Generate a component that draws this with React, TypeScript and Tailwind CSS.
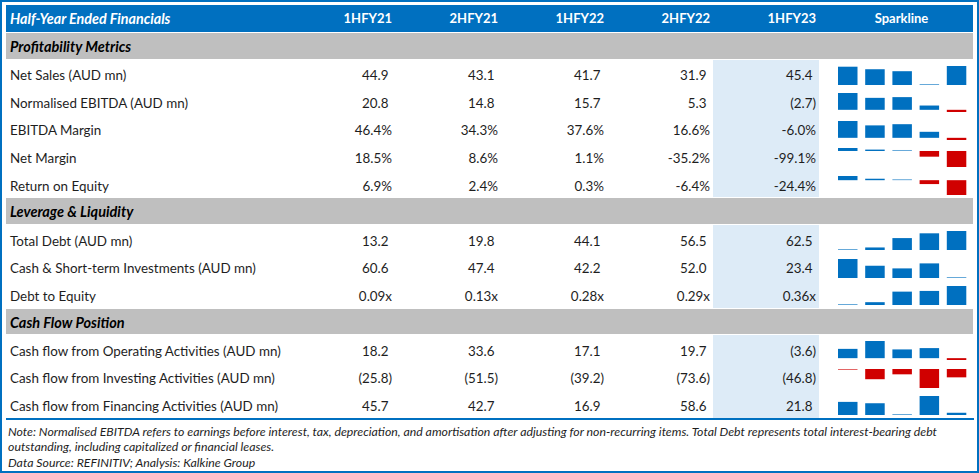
const BLUE = "#0070c0";
const RED = "#d00000";

type Row =
  | { kind: "section"; label: string }
  | { kind: "data"; label: string; cells: string[]; spark: number[] };

const rows: Row[] = [
  { kind: "section", label: "Profitability Metrics" },
  { kind: "data", label: "Net Sales (AUD mn)", cells: ["44.9", "43.1", "41.7", "31.9", "45.4"], spark: [44.9, 43.1, 41.7, 31.9, 45.4] },
  { kind: "data", label: "Normalised EBITDA (AUD mn)", cells: ["20.8", "14.8", "15.7", "5.3", "(2.7)"], spark: [20.8, 14.8, 15.7, 5.3, -2.7] },
  { kind: "data", label: "EBITDA Margin", cells: ["46.4%", "34.3%", "37.6%", "16.6%", "-6.0%"], spark: [46.4, 34.3, 37.6, 16.6, -6.0] },
  { kind: "data", label: "Net Margin", cells: ["18.5%", "8.6%", "1.1%", "-35.2%", "-99.1%"], spark: [18.5, 8.6, 1.1, -35.2, -99.1] },
  { kind: "data", label: "Return on Equity", cells: ["6.9%", "2.4%", "0.3%", "-6.4%", "-24.4%"], spark: [6.9, 2.4, 0.3, -6.4, -24.4] },
  { kind: "section", label: "Leverage & Liquidity" },
  { kind: "data", label: "Total Debt (AUD mn)", cells: ["13.2", "19.8", "44.1", "56.5", "62.5"], spark: [13.2, 19.8, 44.1, 56.5, 62.5] },
  { kind: "data", label: "Cash & Short-term Investments (AUD mn)", cells: ["60.6", "47.4", "42.2", "52.0", "23.4"], spark: [60.6, 47.4, 42.2, 52.0, 23.4] },
  { kind: "data", label: "Debt to Equity", cells: ["0.09x", "0.13x", "0.28x", "0.29x", "0.36x"], spark: [0.09, 0.13, 0.28, 0.29, 0.36] },
  { kind: "section", label: "Cash Flow Position" },
  { kind: "data", label: "Cash flow from Operating Activities (AUD mn)", cells: ["18.2", "33.6", "17.1", "19.7", "(3.6)"], spark: [18.2, 33.6, 17.1, 19.7, -3.6] },
  { kind: "data", label: "Cash flow from Investing Activities (AUD mn)", cells: ["(25.8)", "(51.5)", "(39.2)", "(73.6)", "(46.8)"], spark: [-25.8, -51.5, -39.2, -73.6, -46.8] },
  { kind: "data", label: "Cash flow from Financing Activities (AUD mn)", cells: ["45.7", "42.7", "16.9", "58.6", "21.8"], spark: [45.7, 42.7, 16.9, 58.6, 21.8] },
];

const periods = ["1HFY21", "2HFY21", "1HFY22", "2HFY22", "1HFY23"];

// excel-style column sparkline, scaled per row
function Sparkline({ values }: { values: number[] }) {
  const H = 19;
  const min = Math.min(...values);
  const max = Math.max(...values);
  const base = Math.min(Math.max(0, min), max);
  const scale = H / (max - min);
  const y0 = (max - base) * scale;
  const allNeg = max < 0;

  return (
    <svg width={154} height={27.57} className="block">
      {values.map((v, i) => {
        let h = Math.abs(v - base) * scale;
        let y = v >= base ? (max - v) * scale : y0;
        const thin = h < 1;
        if (thin) {
          h = 1;
          y = allNeg || v < base ? y0 : y0 - 1;
        }
        return (
          <rect
            key={i}
            x={19 + i * 27.2}
            y={6 + y}
            width={19.5}
            height={h}
            fill={v < 0 ? RED : BLUE}
            opacity={thin ? 0.6 : 1}
          />
        );
      })}
    </svg>
  );
}

function Cell({ value, highlight }: { value: string; highlight?: boolean }) {
  // plain positive numbers keep room for a ")" like excel's 0.0_) format
  const pad = /\d$/.test(value);
  return (
    <div className={`flex items-center justify-end pr-[3px] pt-[4px] ${highlight ? "bg-[#ddebf7]" : ""}`}>
      {value}
      {pad && <span className="invisible">)</span>}
    </div>
  );
}

export default function App() {
  return (
    <div
      className="h-[473px] w-[979px] overflow-hidden border-2 border-[#0070c0] bg-white px-[4px] pt-[3px] text-[13.4px] text-[#1e1e1e]"
      style={{ fontFamily: "Lato, 'Open Sans', sans-serif" }}
    >
      <div className="grid h-[27px] grid-cols-[283px_repeat(5,106px)_154px] items-center bg-[#0070c0] text-[13px] font-bold text-white">
        <div className="pl-[4px] text-[14.3px] italic">Half-Year Ended Financials</div>
        {periods.map((p) => (
          <div key={p} className="pr-[3px] text-right">
            {p}
          </div>
        ))}
        <div className="pl-[11px] text-center">Sparkline</div>
      </div>

      {rows.map((r, idx) =>
        r.kind === "section" ? (
          <div key={idx} className="flex h-[27.57px] items-center border-y border-white bg-[#bfbfbf] pl-[4px] pt-[2px] text-[14.5px] font-bold italic text-black">
            {r.label}
          </div>
        ) : (
          <div key={idx} className="grid h-[27.57px] grid-cols-[283px_repeat(5,106px)_154px]">
            <div className="flex items-center pl-[4px] pt-[4px] whitespace-nowrap">{r.label}</div>
            {r.cells.map((c, i) => (
              <Cell key={i} value={c} highlight={i === 4} />
            ))}
            <Sparkline values={r.spark} />
          </div>
        )
      )}

      <div className="h-[2px] w-[968px] bg-[#0070c0]" />

      <div className="mt-[4px] pl-[2px] text-[12.3px] leading-[15.6px] italic whitespace-nowrap">
        <div>
          Note: Normalised EBITDA refers to earnings before interest, tax, depreciation, and amortisation after adjusting for non-recurring items. Total Debt represents total interest-bearing debt
        </div>
        <div>outstanding, including capitalized or financial leases.</div>
        <div>Data Source: REFINITIV; Analysis: Kalkine Group</div>
      </div>
    </div>
  );
}
